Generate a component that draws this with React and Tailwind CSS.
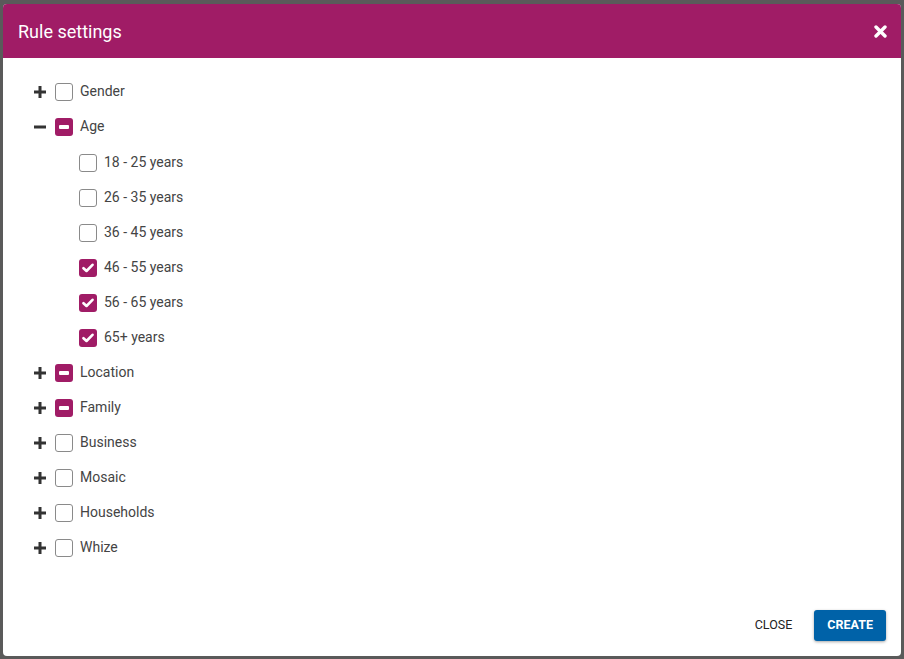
import React, { useState } from 'react';

const groups = [
  { name: 'Gender', open: false, state: 'none' },
  {
    name: 'Age',
    open: true,
    state: 'some',
    items: [
      { name: '18 - 25 years', checked: false },
      { name: '26 - 35 years', checked: false },
      { name: '36 - 45 years', checked: false },
      { name: '46 - 55 years', checked: true },
      { name: '56 - 65 years', checked: true },
      { name: '65+ years', checked: true },
    ],
  },
  { name: 'Location', open: false, state: 'some' },
  { name: 'Family', open: false, state: 'some' },
  { name: 'Business', open: false, state: 'none' },
  { name: 'Mosaic', open: false, state: 'none' },
  { name: 'Households', open: false, state: 'none' },
  { name: 'Whize', open: false, state: 'none' },
];

const Checkbox = ({ state }) => {
  if (state === 'all') {
    return (
      <span className="w-[18px] h-[18px] rounded-[3px] bg-[#a01c66] flex items-center justify-center">
        <svg width="12" height="10" viewBox="0 0 12 10">
          <path d="M1.5 5.2 L4.5 8 L10.5 1.8" stroke="white" strokeWidth="2.6" fill="none" strokeLinecap="round" strokeLinejoin="round" />
        </svg>
      </span>
    );
  }
  if (state === 'some') {
    return (
      <span className="w-[18px] h-[18px] rounded-[3px] bg-[#a01c66] flex items-center justify-center">
        <span className="w-[10px] h-[4px] rounded-[1px] bg-white" />
      </span>
    );
  }
  return <span className="w-[18px] h-[18px] rounded-[3px] border border-[#8a8a8a] bg-white" />;
};

const Toggle = ({ open }) => (
  <svg width="12" height="12" viewBox="0 0 12 12" className="text-[#333]">
    <rect x="0" y="4.5" width="12" height="3" fill="currentColor" />
    {!open && <rect x="4.5" y="0" width="3" height="12" fill="currentColor" />}
  </svg>
);

export default function App() {
  const [list] = useState(groups);

  return (
    <div className="w-[904px] h-[659px] bg-[#5a5a5a] pt-[4px] px-[3px] pb-[3px]" style={{ fontFamily: 'Roboto, "Liberation Sans", sans-serif' }}>
      <div className="h-full bg-white rounded-[4px] flex flex-col overflow-hidden">
        <div className="h-[54px] bg-[#a01c66] flex items-center justify-between pl-[15px] pr-[14px] shrink-0">
          <h2 className="text-white text-[18px] font-normal">Rule settings</h2>
          <svg width="13" height="13" viewBox="0 0 13 13">
            <path d="M2 2 L11 11 M11 2 L2 11" stroke="white" strokeWidth="3.4" strokeLinecap="round" />
          </svg>
        </div>
        <div className="flex-1 pt-[16px] pl-[31px]">
          {list.map((g) => (
            <div key={g.name}>
              <div className="h-[35px] flex items-center">
                <span className="w-[21px] flex items-center"><Toggle open={g.open} /></span>
                <Checkbox state={g.state} />
                <span className="ml-[7px] text-[14px] text-[#444]">{g.name}</span>
              </div>
              {g.open && (
                <div className="pt-[1px]">
                  {g.items.map((it) => (
                    <div key={it.name} className="h-[35px] flex items-center pl-[45px]">
                      <Checkbox state={it.checked ? 'all' : 'none'} />
                      <span className="ml-[7px] text-[14px] text-[#444]">{it.name}</span>
                    </div>
                  ))}
                </div>
              )}
            </div>
          ))}
        </div>
        <div className="flex items-center justify-end gap-[22px] pr-[15px] pb-[15px]">
          <button className="text-[12.5px] font-normal text-[#222] uppercase">Close</button>
          <button className="h-[31px] px-[13px] rounded-[3px] bg-[#0062a8] text-white text-[12.5px] font-bold uppercase shadow-[0_1px_3px_rgba(0,0,0,0.35)]">
            Create
          </button>
        </div>
      </div>
    </div>
  );
}
